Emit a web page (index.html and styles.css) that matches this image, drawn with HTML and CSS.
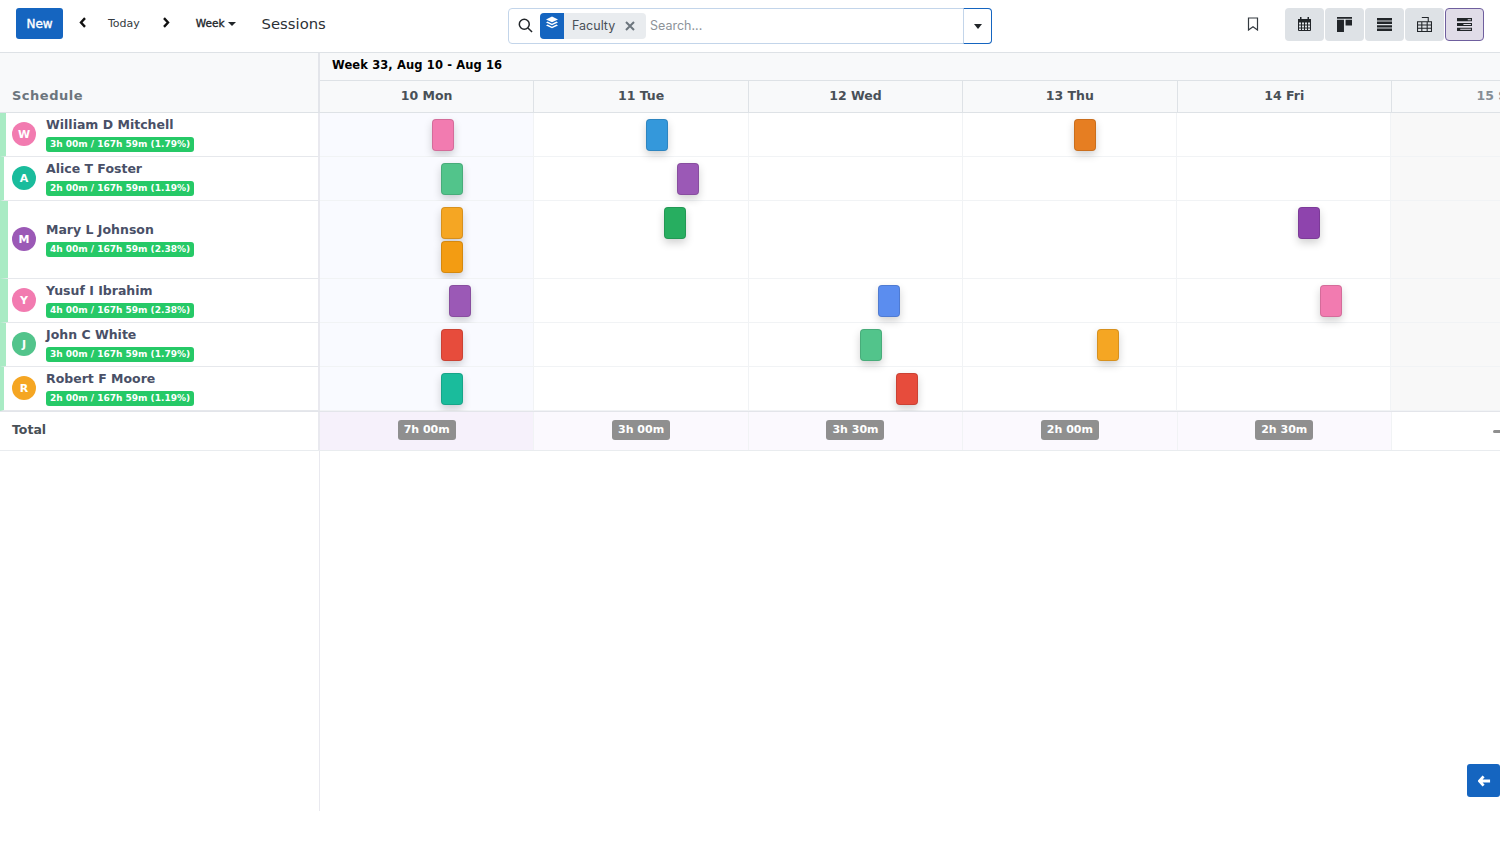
FILE: index.html
```html
<!DOCTYPE html>
<html lang="en">
<head>
<meta charset="utf-8">
<title>Sessions</title>
<link rel="stylesheet" href="styles.css">
</head>
<body>
<header class="topbar">
  <div class="left">
    <button class="new">New</button>
    <svg class="chev prev" viewBox="0 0 8 12"><path d="M6.2 1.200 1.800 6l4.400 4.800" /></svg>
    <span class="today">Today</span>
    <svg class="chev next" viewBox="0 0 8 12"><path d="M1.800 1.200 6.200 6l-4.400 4.800" /></svg>
    <span class="week">Week<i class="caret"></i></span>
    <span class="title">Sessions</span>
  </div>
  <div class="search">
    <svg class="glass" viewBox="0 0 16 16"><circle cx="6.700" cy="6.700" r="5.300"/><path d="m10.600 10.600 4.400 4.400"/></svg>
    <div class="chip">
      <span class="chip-icon"><svg viewBox="0 0 14 14"><path d="M7 .5 13 3.400 7 6.300 1 3.400Z"/><path d="M2.600 5.600 7 7.700l4.400-2.100L13 6.400 7 9.300 1 6.400Z"/><path d="M2.600 8.600 7 10.700l4.400-2.100L13 9.400 7 12.300 1 9.400Z"/></svg></span>
      <span class="chip-text">Faculty</span>
      <svg class="chip-x" viewBox="0 0 10 10"><path d="m1 1 8 8M9 1 1 9"/></svg>
    </div>
    <span class="placeholder">Search...</span>
    <span class="drop"><i class="caret big"></i></span>
  </div>
  <div class="right">
    <svg class="bookmark" viewBox="0 0 12 14"><path d="M1.500 1h9v12L6 9.700 1.500 13Z"/></svg>
    <div class="views">
      <button class="view"><svg viewBox="0 0 14 15"><path class="fill" d="M2.500 0h1.500v2.500h-1.500zM10 0h1.500v2.500H10z"/><path class="fill" d="M.5 2h13v3.500H.5z"/><path class="line" d="M1 5v8.500h12V5M1 8h12M1 11h12M4 5v8.500M7 5v8.500M10 5v8.500"/></svg></button>
      <button class="view"><svg viewBox="0 0 14 14"><path class="fill" d="M0 0h14v1.700H0zM0 2.500h6.500V14H0zM8 2.500h6V8H8z"/></svg></button>
      <button class="view"><svg viewBox="0 0 14 12"><path class="fill" d="M0 0h14v2.300H0zM0 3.300h14v2.300H0zM0 6.600h14v2.300H0zM0 9.700h14V12H0z"/></svg></button>
      <button class="view"><svg viewBox="0 0 14 14"><path class="line" d="M4.500.5h6v3M.5 4.500h13v9H.5zM.5 7.500h13M.5 10.500h13M4.500 4.500v9M9.500 4.500v9M10.500 3.500v1"/></svg></button>
      <button class="view active"><svg viewBox="0 0 14 12"><path class="fill" d="M0 0h14v3H0zM0 4.500h14v3H0zM0 9h14v3H0z"/><path class="cut" d="M10 1h3v1h-3zM6 5.500h7v1H6zM3 10h10v1H3z"/></svg></button>
    </div>
  </div>
</header>

<main class="gantt">
  <div class="head">
    <div class="head-side">Schedule</div>
    <div class="head-main">
      <div class="week-label">Week 33, Aug 10 - Aug 16</div>
      <div class="days">
        <div class="day">10 Mon</div>
        <div class="day">11 Tue</div>
        <div class="day">12 Wed</div>
        <div class="day">13 Thu</div>
        <div class="day">14 Fri</div>
        <div class="day off">15 Sat</div>
      </div>
    </div>
  </div>

  <div class="row">
    <div class="who b6"><span class="avatar pink">W</span><div class="info"><div class="name">William D Mitchell</div><div class="hours">3h 00m / 167h 59m (1.79%)</div></div></div>
    <div class="cell mon"><span class="pill pink" style="margin-left:112px"></span></div>
    <div class="cell"><span class="pill blue" style="margin-left:112px"></span></div>
    <div class="cell"></div>
    <div class="cell"><span class="pill orange" style="margin-left:111px"></span></div>
    <div class="cell"></div>
    <div class="cell sat"></div>
  </div>
  <div class="row">
    <div class="who b4"><span class="avatar teal">A</span><div class="info"><div class="name">Alice T Foster</div><div class="hours">2h 00m / 167h 59m (1.19%)</div></div></div>
    <div class="cell mon"><span class="pill green" style="margin-left:121px"></span></div>
    <div class="cell"><span class="pill purple" style="margin-left:143px"></span></div>
    <div class="cell"></div>
    <div class="cell"></div>
    <div class="cell"></div>
    <div class="cell sat"></div>
  </div>
  <div class="row tall">
    <div class="who b8"><span class="avatar purple">M</span><div class="info"><div class="name">Mary L Johnson</div><div class="hours">4h 00m / 167h 59m (2.38%)</div></div></div>
    <div class="cell mon"><span class="pill amber" style="margin-left:121px"></span><span class="pill tangerine" style="margin-left:121px"></span></div>
    <div class="cell"><span class="pill emerald" style="margin-left:130px"></span></div>
    <div class="cell"></div>
    <div class="cell"></div>
    <div class="cell"><span class="pill violet" style="margin-left:121px"></span></div>
    <div class="cell sat"></div>
  </div>
  <div class="row">
    <div class="who b8"><span class="avatar pink">Y</span><div class="info"><div class="name">Yusuf I Ibrahim</div><div class="hours">4h 00m / 167h 59m (2.38%)</div></div></div>
    <div class="cell mon"><span class="pill purple" style="margin-left:129px"></span></div>
    <div class="cell"></div>
    <div class="cell"><span class="pill periwinkle" style="margin-left:129px"></span></div>
    <div class="cell"></div>
    <div class="cell"><span class="pill pink" style="margin-left:143px"></span></div>
    <div class="cell sat"></div>
  </div>
  <div class="row">
    <div class="who b6"><span class="avatar green">J</span><div class="info"><div class="name">John C White</div><div class="hours">3h 00m / 167h 59m (1.79%)</div></div></div>
    <div class="cell mon"><span class="pill red" style="margin-left:121px"></span></div>
    <div class="cell"></div>
    <div class="cell"><span class="pill green" style="margin-left:111px"></span></div>
    <div class="cell"><span class="pill amber" style="margin-left:134px"></span></div>
    <div class="cell"></div>
    <div class="cell sat"></div>
  </div>
  <div class="row">
    <div class="who b4"><span class="avatar amber">R</span><div class="info"><div class="name">Robert F Moore</div><div class="hours">2h 00m / 167h 59m (1.19%)</div></div></div>
    <div class="cell mon"><span class="pill teal" style="margin-left:121px"></span></div>
    <div class="cell"></div>
    <div class="cell"><span class="pill red" style="margin-left:147px"></span></div>
    <div class="cell"></div>
    <div class="cell"></div>
    <div class="cell sat"></div>
  </div>

  <div class="total">
    <div class="total-label">Total</div>
    <div class="sum mon"><span class="sum-badge">7h 00m</span></div>
    <div class="sum"><span class="sum-badge">3h 00m</span></div>
    <div class="sum"><span class="sum-badge">3h 30m</span></div>
    <div class="sum"><span class="sum-badge">2h 00m</span></div>
    <div class="sum"><span class="sum-badge">2h 30m</span></div>
    <div class="sum sat"><span class="dash"></span></div>
  </div>
  <div class="rest"></div>
</main>

<button class="fab"><svg viewBox="0 0 14 12"><path d="M6 1 1.500 6 6 11M2 6h11"/></svg></button>
</body>
</html>
```

FILE: styles.css
```css
* { box-sizing: border-box; }
html, body { margin: 0; height: 100%; overflow: hidden; background: #fff; }
body { width: 1500px; height: 854px; position: relative; font-family: "DejaVu Sans", sans-serif; color: #212529; }
button { font: inherit; border: 0; padding: 0; }

.topbar { height: 53px; border-bottom: 1px solid #dee2e6; display: flex; align-items: flex-start; }
.left { width: 508px; height: 52px; padding: 8px 0 0 16px; display: flex; align-items: flex-start; flex: none; }
.new { width: 47px; height: 31px; background: #1565c0; color: #fff; border-radius: 3px; font-size: 12px; -webkit-text-stroke: .4px #fff; }
.chev { width: 8px; height: 11px; fill: none; stroke: #111; stroke-width: 2.600; margin-top: 9px; }
.prev { margin-left: 16px; }
.today { font-size: 11px; color: #343a40; margin: 8px 0 0 21px; line-height: 15px; }
.next { margin-left: 22px; }
.week { font-size: 10.500px; color: #212529; -webkit-text-stroke: .35px #212529; margin: 8px 0 0 26px; line-height: 15px; display: flex; align-items: center; }
.caret { display: inline-block; margin-left: 3px; border-left: 4px solid transparent; border-right: 4px solid transparent; border-top: 4px solid #212529; -webkit-text-stroke: 0; }
.title { font-size: 14.800px; color: #2b3035; margin: 7px 0 0 26px; line-height: 18px; }

.search { width: 484px; height: 36px; margin-top: 8px; border: 1px solid #c3d5ea; border-radius: 4px; display: flex; align-items: center; flex: none; position: relative; font-family: "Inter", sans-serif; }
.glass { width: 15px; height: 15px; margin-left: 9px; fill: none; stroke: #212529; stroke-width: 1.600; margin-bottom: 1px; }
.chip { margin-left: 7px; width: 106px; height: 26px; background: #e9ecef; border-radius: 4px; display: flex; align-items: center; overflow: hidden; }
.chip-icon { width: 24px; height: 26px; background: #1565c0; display: flex; justify-content: center; padding-top: 3px; flex: none; align-self: stretch; }
.chip-icon svg { width: 14px; height: 14px; fill: #fff; }
.chip-text { font-size: 12.500px; color: #495057; margin-left: 8px; margin-bottom: 1px; font-family: "Inter", sans-serif; }
.chip-x { width: 10px; height: 10px; margin-left: 10px; margin-bottom: 1px; fill: none; stroke: #6c757d; stroke-width: 2; }
.placeholder { font-size: 12.500px; color: #8d9399; margin-left: 4px; margin-bottom: 2px; }
.drop { position: absolute; right: -1px; top: -1px; width: 29px; height: 36px; border: 1px solid #1565c0; border-left-color: #c3d5ea; border-radius: 0 4px 4px 0; display: flex; align-items: center; justify-content: center; background: #fff; }
.caret.big { margin: 0; border-left-width: 4.500px; border-right-width: 4.500px; border-top-width: 5px; border-top-color: #212529; }

.right { flex: 1; display: flex; justify-content: flex-end; align-items: flex-start; padding: 8px 16px 0 0; }
.bookmark { width: 12px; height: 14px; margin: 9px 26px 0 0; fill: none; stroke: #343a40; stroke-width: 1.200; }
.views { display: flex; gap: 1px; }
.view { width: 39px; height: 33px; background: #dee2e6; border-radius: 4px; display: flex; align-items: center; justify-content: center; }
.view svg { width: 15px; height: 15px; }
.fill { fill: #212529; }
.line { fill: none; stroke: #212529; stroke-width: 1; }
.cut { fill: #e0dce8; }
.view.active { background: #e0dce8; border: 1px solid #6f5f9e; }

.gantt { height: 758px; display: flex; flex-direction: column; }
.head { display: flex; height: 60px; border-bottom: 1px solid #dee2e6; background: #f8f9fa; }
.head-side { width: 320px; flex: none; border-right: 2px solid #e3e5ea; padding: 35px 0 0 12px; font-size: 13px; font-weight: 700; color: #6c757d; line-height: 16px; letter-spacing: .5px; }
.head-main { flex: 1; min-width: 0; }
.week-label { height: 28px; border-bottom: 1px solid #dee2e6; background: #f8f9fa; padding: 5px 0 0 12px; font-size: 11.500px; font-weight: 700; color: #000; line-height: 15px; letter-spacing: .12px; }
.days { height: 31px; display: flex; }
.day { width: 214.400px; flex: none; border-right: 1px solid #dee2e6; text-align: center; font-size: 12.500px; font-weight: 700; color: #495057; line-height: 30px; }
.day.off { color: #868e96; border-right: 0; }

.row { display: flex; height: 44px; flex: none; }
.row.tall { height: 78px; }
.who { width: 320px; flex: none; border-right: 2px solid #e9e9ef; border-bottom: 1px solid #e6e8ec; display: flex; align-items: center; padding-left: 12px; position: relative; border-left: 0 solid #a9ebc4; gap: 10px; background: #fff; }
.b4 { border-left-width: 4px; padding-left: 8px; }
.b6 { border-left-width: 6px; padding-left: 6px; }
.b8 { border-left-width: 8px; padding-left: 4px; }
.avatar { width: 24px; height: 24px; border-radius: 50%; color: #fff; font-size: 11px; font-weight: 700; display: flex; align-items: center; justify-content: center; flex: none; margin-top: -1px; }
.info { display: flex; flex-direction: column; gap: 4px; }
.name { font-size: 12.500px; font-weight: 700; color: #495067; line-height: 16px; }
.hours { width: 148px; height: 15px; border-radius: 3px; background: #26c967; color: #fff; font-size: 9px; font-weight: 700; line-height: 15px; padding-left: 4px; white-space: nowrap; }

.cell { width: 214.300px; flex: none; border-right: 1px solid #f1f3f5; border-bottom: 1px solid #f1f3f5; padding-top: 6px; display: flex; flex-direction: column; gap: 2px; }
.cell.mon { background: #f9faff; }
.cell.sat { background: #f8f8f8; border-right: 0; }
.pill { display: block; width: 22px; height: 32px; border-radius: 4px; border: 1px solid rgba(0,0,0,.12); box-shadow: 0 4px 8px rgba(0,0,0,.18); flex: none; }
.pink { background: #f27bb0; }
.blue { background: #3498db; }
.orange { background: #e67e22; }
.green { background: #52c48b; }
.purple { background: #9b59b6; }
.amber { background: #f5a623; }
.tangerine { background: #f39c12; }
.emerald { background: #27ae60; }
.violet { background: #8e44ad; }
.periwinkle { background: #5b8def; }
.red { background: #e74c3c; }
.teal { background: #1abc9c; }

.total { display: flex; height: 40px; border-top: 1px solid #e3e5ea; border-bottom: 1px solid #e9ecef; flex: none; }
.total-label { width: 320px; flex: none; border-right: 2px solid #e9e9ef; padding: 10px 0 0 12px; font-size: 12.500px; font-weight: 700; color: #495057; line-height: 16px; }
.sum { width: 214.400px; flex: none; background: #fbf9fe; border-right: 1px solid #f1f3f5; display: flex; justify-content: center; padding-top: 8px; }
.sum.mon { background: #f6f1fb; }
.sum.sat { background: #fff; border-right: 0; }
.sum-badge { height: 20px; width: 58px; border-radius: 3px; background: #8f8f8f; color: #fff; font-size: 11px; font-weight: 700; line-height: 19px; text-align: center; }
.dash { width: 12px; height: 3px; background: #8f8f8f; border-radius: 2px; margin-top: 10px; }
.rest { flex: 1; width: 320px; border-right: 1px solid #e9e9ef; }

.fab { position: absolute; right: 0; top: 764px; width: 33px; height: 33px; background: #1565c0; border-radius: 3px; display: flex; align-items: center; justify-content: center; padding-left: 2px; }
.fab svg { width: 13px; height: 12px; fill: none; stroke: #fff; stroke-width: 3; }
```
